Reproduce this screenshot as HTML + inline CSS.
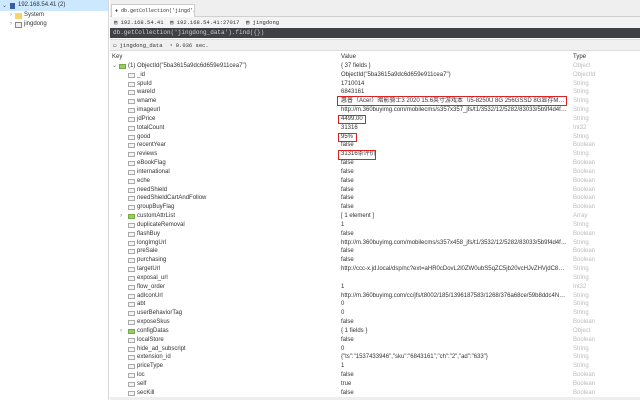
<!DOCTYPE html>
<html><head><meta charset="utf-8"><style>
*{margin:0;padding:0;box-sizing:border-box}
body{width:640px;height:400px;overflow:hidden;background:#fff;font-family:"Liberation Sans","Noto Sans CJK SC",sans-serif;font-size:6px;color:#333;position:relative}
.abs{position:absolute;white-space:nowrap}
.left{left:0;top:0;width:109px;height:400px;background:#fff;border-right:1px solid #d8d8d8}
.sel{left:0;top:0;width:108px;height:11px;background:#cce8ff}
.mono{font-family:"Liberation Mono",monospace}
#rows{position:absolute;left:110px;top:62px;width:530px}
.r{height:8.84px;line-height:8.84px;position:relative;white-space:nowrap}
.r .ic{position:absolute;left:18px;top:2px;width:7px;height:5px;border:1px solid #aaa;background:#f4f4f4}
.r .ic.g{background:#9c6;border-color:#7a4}
.r .ex{position:absolute;left:10px;top:0;color:#777;font-size:6px}
.r .k{position:absolute;left:27px}
.r .v{position:absolute;left:231px;width:226px;overflow:hidden;text-overflow:ellipsis}
.r .t{position:absolute;left:463px;color:#bbb}
.box{position:absolute;border:1.5px solid #d22}
</style></head><body>
<div class="abs left"></div>
<div class="abs sel"></div>
<div class="abs" style="left:2px;top:2px;color:#555">⌄</div>
<div class="abs" style="left:10px;top:3px;width:5px;height:6px;background:#3a5fa0"></div>
<div class="abs" style="left:18px;top:2px">192.168.54.41 (2)</div>
<div class="abs" style="left:10px;top:12px;color:#888">›</div>
<div class="abs" style="left:15px;top:13px;width:7px;height:6px;background:#f5d46a"></div>
<div class="abs" style="left:24px;top:12px">System</div>
<div class="abs" style="left:10px;top:21px;color:#888">›</div>
<div class="abs" style="left:15px;top:22px;width:7px;height:6px;border:1px solid #888;background:#eee"></div>
<div class="abs" style="left:24px;top:21px">jingdong</div>

<div class="abs" style="left:110px;top:0;width:530px;height:17px;background:#efefef;border-bottom:1px solid #d0d0d0"></div>
<div class="abs mono" style="left:111px;top:4px;width:84px;height:13px;background:#fff;border:1px solid #ccc;border-bottom:none;padding:3px 0 0 3px;font-size:5px;overflow:hidden">♦ db.getCollection('jingd'…×</div>
<div class="abs" style="left:110px;top:17px;width:530px;height:11px;background:#f3f3f3"></div>
<div class="abs mono" style="left:114px;top:19px;font-size:5.5px">▤ 192.168.54.41 &nbsp;▤ 192.168.54.41:27017 &nbsp;▤ jingdong</div>
<div class="abs mono" style="left:110px;top:28px;width:530px;height:10px;background:#3e4244;color:#ccc;padding:1px 0 0 3px;font-size:6px">db.getCollection('jingdong_data').find({})</div>
<div class="abs" style="left:110px;top:39px;width:530px;height:12px;background:#f0f0f0;border-top:1px solid #ddd;border-bottom:1px solid #ddd"></div>
<div class="abs mono" style="left:113px;top:42px;font-size:5.5px">▭ jingdong_data &nbsp;◔ 0.036 sec.</div>
<div class="abs" style="left:112px;top:54px">Key</div>
<div class="abs" style="left:341px;top:54px">Value</div>
<div class="abs" style="left:573px;top:54px">Type</div>

<div id="rows">
<div class="r"><span class="ex" style="left:2px">⌄</span><span class="ic g" style="left:9px"></span><span class="k" style="left:18px">(1) ObjectId("5ba3615a9dc6d659e911cea7")</span><span class="v">{ 37 fields }</span><span class="t">Object</span></div>
<div class="r"><span class="ic"></span><span class="k">_id</span><span class="v">ObjectId("5ba3615a9dc6d659e911cea7")</span><span class="t">ObjectId</span></div>
<div class="r"><span class="ic"></span><span class="k">spuId</span><span class="v">1710014</span><span class="t">String</span></div>
<div class="r"><span class="ic"></span><span class="k">wareId</span><span class="v">6843161</span><span class="t">String</span></div>
<div class="r"><span class="ic"></span><span class="k">wname</span><span class="v">惠普（Acer）暗影骑士3 2020 15.6英寸游戏本（i5-8250U 8G 256GSSD 8G显存MX独显RGB背光）</span><span class="t">String</span></div>
<div class="r"><span class="ic"></span><span class="k">imageurl</span><span class="v">http://m.360buyimg.com/mobilecms/s357x357_jfs/t1/3532/12/5282/83033/5b9f4d4fE2a2b0...</span><span class="t">String</span></div>
<div class="r"><span class="ic"></span><span class="k">jdPrice</span><span class="v">4499.00</span><span class="t">String</span></div>
<div class="r"><span class="ic"></span><span class="k">totalCount</span><span class="v">31316</span><span class="t">Int32</span></div>
<div class="r"><span class="ic"></span><span class="k">good</span><span class="v">95%</span><span class="t">String</span></div>
<div class="r"><span class="ic"></span><span class="k">recentYear</span><span class="v">false</span><span class="t">Boolean</span></div>
<div class="r"><span class="ic"></span><span class="k">reviews</span><span class="v">31316条评价</span><span class="t">String</span></div>
<div class="r"><span class="ic"></span><span class="k">eBookFlag</span><span class="v">false</span><span class="t">Boolean</span></div>
<div class="r"><span class="ic"></span><span class="k">international</span><span class="v">false</span><span class="t">Boolean</span></div>
<div class="r"><span class="ic"></span><span class="k">eche</span><span class="v">false</span><span class="t">Boolean</span></div>
<div class="r"><span class="ic"></span><span class="k">needShield</span><span class="v">false</span><span class="t">Boolean</span></div>
<div class="r"><span class="ic"></span><span class="k">needShieldCartAndFollow</span><span class="v">false</span><span class="t">Boolean</span></div>
<div class="r"><span class="ic"></span><span class="k">groupBuyFlag</span><span class="v">false</span><span class="t">Boolean</span></div>
<div class="r"><span class="ex">›</span><span class="ic g"></span><span class="k">customAttrList</span><span class="v">[ 1 element ]</span><span class="t">Array</span></div>
<div class="r"><span class="ic"></span><span class="k">duplicateRemoval</span><span class="v">1</span><span class="t">String</span></div>
<div class="r"><span class="ic"></span><span class="k">flashBuy</span><span class="v">false</span><span class="t">Boolean</span></div>
<div class="r"><span class="ic"></span><span class="k">longImgUrl</span><span class="v">http://m.360buyimg.com/mobilecms/s357x458_jfs/t1/3532/12/5282/83033/5b9f4d4fE2a2b0...</span><span class="t">String</span></div>
<div class="r"><span class="ic"></span><span class="k">preSale</span><span class="v">false</span><span class="t">Boolean</span></div>
<div class="r"><span class="ic"></span><span class="k">purchasing</span><span class="v">false</span><span class="t">Boolean</span></div>
<div class="r"><span class="ic"></span><span class="k">targetUrl</span><span class="v">http://ccc-x.jd.local/dsp/nc?ext=aHR0cDovL2l0ZW0ubS5qZC5jb20vcHJvZHVjdC82ODQzMTY...</span><span class="t">String</span></div>
<div class="r"><span class="ic"></span><span class="k">exposal_url</span><span class="v"></span><span class="t">String</span></div>
<div class="r"><span class="ic"></span><span class="k">flow_order</span><span class="v">1</span><span class="t">Int32</span></div>
<div class="r"><span class="ic"></span><span class="k">adIconUrl</span><span class="v">http://m.360buyimg.com/cc/jfs/t8002/185/1396187583/1268/376a68ce/59b8ddc4N18c29d2...</span><span class="t">String</span></div>
<div class="r"><span class="ic"></span><span class="k">abt</span><span class="v">0</span><span class="t">String</span></div>
<div class="r"><span class="ic"></span><span class="k">userBehaviorTag</span><span class="v">0</span><span class="t">String</span></div>
<div class="r"><span class="ic"></span><span class="k">exposeSkus</span><span class="v">false</span><span class="t">Boolean</span></div>
<div class="r"><span class="ex">›</span><span class="ic g"></span><span class="k">configDatas</span><span class="v">{ 1 fields }</span><span class="t">Object</span></div>
<div class="r"><span class="ic"></span><span class="k">localStore</span><span class="v">false</span><span class="t">Boolean</span></div>
<div class="r"><span class="ic"></span><span class="k">hide_ad_subscript</span><span class="v">0</span><span class="t">String</span></div>
<div class="r"><span class="ic"></span><span class="k">extension_id</span><span class="v">{"ts":"1537433946","sku":"6843161","ch":"2","ad":"633"}</span><span class="t">String</span></div>
<div class="r"><span class="ic"></span><span class="k">priceType</span><span class="v">1</span><span class="t">String</span></div>
<div class="r"><span class="ic"></span><span class="k">loc</span><span class="v">false</span><span class="t">Boolean</span></div>
<div class="r"><span class="ic"></span><span class="k">self</span><span class="v">true</span><span class="t">Boolean</span></div>
<div class="r"><span class="ic"></span><span class="k">secKill</span><span class="v">false</span><span class="t">Boolean</span></div>
</div>
<div class="box" style="left:337px;top:96px;width:230px;height:10px"></div>
<div class="box" style="left:338px;top:115px;width:28px;height:9px"></div>
<div class="box" style="left:338px;top:133px;width:19px;height:9px"></div>
<div class="box" style="left:338px;top:150px;width:38px;height:10px"></div>
<div class="abs" style="left:110px;top:397px;width:530px;height:3px;background:#eee"></div>
</body></html>
